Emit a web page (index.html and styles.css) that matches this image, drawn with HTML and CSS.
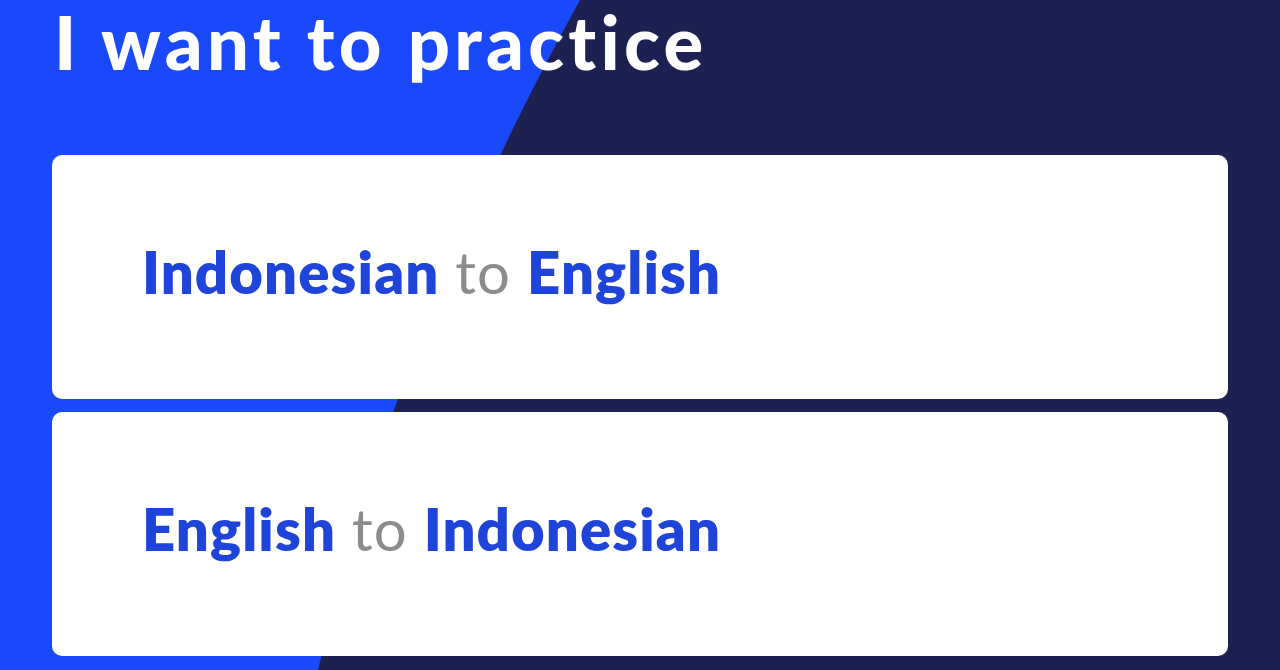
FILE: index.html
```html
<!DOCTYPE html>
<html lang="en">
<head>
<meta charset="UTF-8">
<meta name="viewport" content="width=device-width, initial-scale=1.0">
<title>Practice</title>
<link rel="stylesheet" href="styles.css">
</head>
<body>

<div class="screen">
    <!-- curved blue swoosh behind the content -->
    <svg class="backdrop" viewBox="0 0 1280 670" preserveAspectRatio="none">
        <path d="M0 0 L580 0 Q395 335 318 670 L0 670 Z" fill="#1a48fb"/>
    </svg>

    <h1 class="title">I want to practice</h1>

    <div class="options">
        <div class="option">
            <p class="pair"><span class="lang">Indonesian</span> <span class="to">to</span> <span class="lang">English</span></p>
        </div>
        <div class="option">
            <p class="pair"><span class="lang">English</span> <span class="to">to</span> <span class="lang">Indonesian</span></p>
        </div>
    </div>
</div>

</body>
</html>
```

FILE: styles.css
```css
body {
    margin: 0;
    font-family: Lato, "Open Sans", sans-serif;
}

.screen {
    position: relative;
    height: 670px;
    overflow: hidden;
    background-color: #1d2151;
    padding: 0 52px;
}

.backdrop {
    position: absolute;
    top: 0;
    left: 0;
    width: 100%;
    height: 100%;
}

.title {
    position: relative;
    margin: 0;
    height: 155px;
    padding-top: 5px;
    padding-left: 2px;
    box-sizing: border-box;
    font-size: 74px;
    font-weight: 900;
    line-height: 1;
    letter-spacing: 4.3px;
    color: #fff;
}

.options {
    position: relative;
    display: flex;
    flex-direction: column;
    gap: 13px;
}

.option {
    height: 244px;
    display: flex;
    align-items: center;
    padding-left: 90px;
    padding-bottom: 12px;
    box-sizing: border-box;
    background-color: #fff;
    border-radius: 10px;
}

.pair {
    margin: 0;
    font-size: 58px;
    letter-spacing: 1.1px;
}

.lang {
    font-weight: 800;
    color: #1e44d9;
}

.to {
    font-weight: 400;
    color: #8c8c8c;
}
```
